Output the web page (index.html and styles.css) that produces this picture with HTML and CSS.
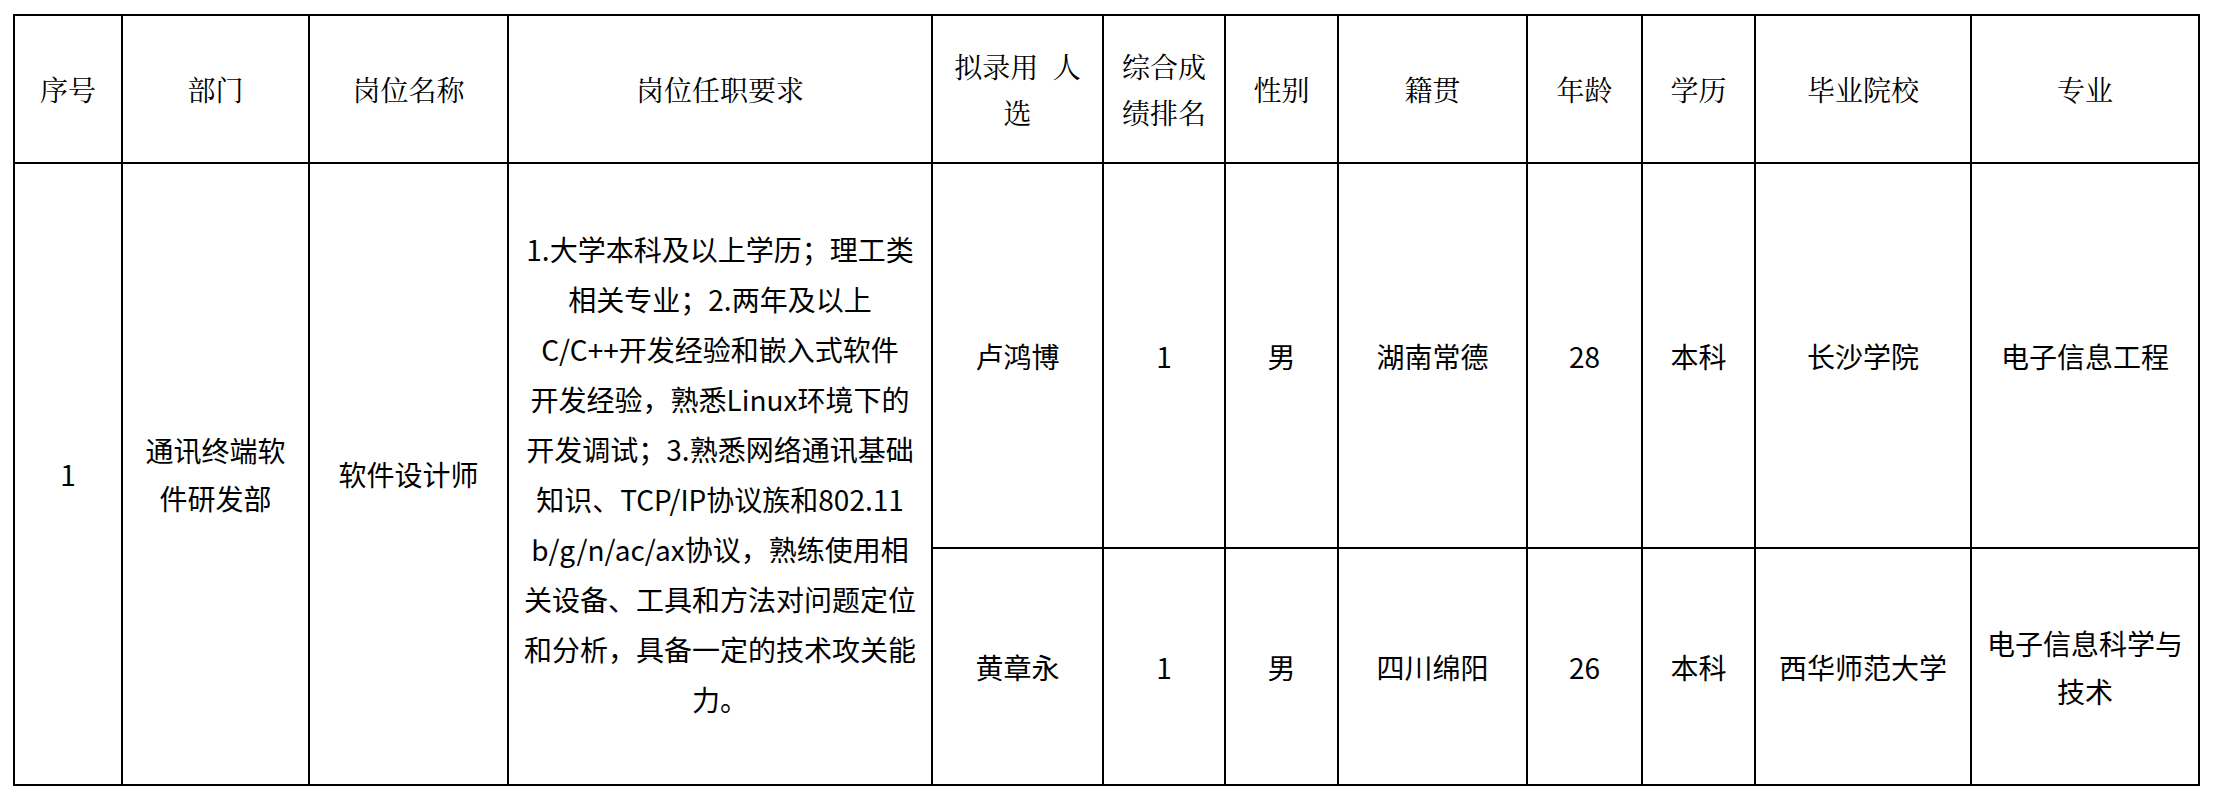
FILE: index.html
```html
<!DOCTYPE html>
<html lang="zh-CN">
<head>
<meta charset="utf-8">
<title>拟录用人员</title>
<link rel="stylesheet" href="styles.css">
</head>
<body>
<table class="grid">
  <colgroup>
    <col class="c1"><col class="c2"><col class="c3"><col class="c4"><col class="c5"><col class="c6">
    <col class="c7"><col class="c8"><col class="c9"><col class="c10"><col class="c11"><col class="c12">
  </colgroup>
  <thead>
    <tr class="head-row">
      <th>序号</th>
      <th>部门</th>
      <th>岗位名称</th>
      <th>岗位任职要求</th>
      <th>拟录用&nbsp;&nbsp;人<br>选</th>
      <th>综合成<br>绩排名</th>
      <th>性别</th>
      <th>籍贯</th>
      <th>年龄</th>
      <th>学历</th>
      <th>毕业院校</th>
      <th>专业</th>
    </tr>
  </thead>
  <tbody>
    <tr class="row-a">
      <td rowspan="2">1</td>
      <td rowspan="2" class="dept">通讯终端软<br>件研发部</td>
      <td rowspan="2">软件设计师</td>
      <td rowspan="2" class="req">1.大学本科及以上学历；理工类<br>相关专业；2.两年及以上<br>C/C++开发经验和嵌入式软件<br>开发经验，熟悉Linux环境下的<br>开发调试；3.熟悉网络通讯基础<br>知识、TCP/IP协议族和802.11<br>b/g/n/ac/ax协议，熟练使用相<br>关设备、工具和方法对问题定位<br>和分析，具备一定的技术攻关能<br>力。</td>
      <td>卢鸿博</td>
      <td>1</td>
      <td>男</td>
      <td>湖南常德</td>
      <td>28</td>
      <td>本科</td>
      <td>长沙学院</td>
      <td>电子信息工程</td>
    </tr>
    <tr class="row-b">
      <td>黄章永</td>
      <td>1</td>
      <td>男</td>
      <td>四川绵阳</td>
      <td>26</td>
      <td>本科</td>
      <td>西华师范大学</td>
      <td class="major">电子信息科学与<br>技术</td>
    </tr>
  </tbody>
</table>
</body>
</html>
```

FILE: styles.css
```css
html, body {
  margin: 0;
  padding: 0;
  background: #ffffff;
}

body {
  padding: 14px 0 0 13px;
}

.grid {
  border-collapse: collapse;
  table-layout: fixed;
  width: 2186px;
  color: #000;
  font-family: "Noto Sans CJK SC", "Noto Sans", sans-serif;
  font-size: 28px;
}

.c1 { width: 108px; }
.c2 { width: 187px; }
.c3 { width: 199px; }
.c4 { width: 424px; }
.c5 { width: 171px; }
.c6 { width: 122px; }
.c7 { width: 113px; }
.c8 { width: 189px; }
.c9 { width: 115px; }
.c10 { width: 113px; }
.c11 { width: 216px; }
.c12 { width: 228px; }

.grid th,
.grid td {
  border: 2px solid #000;
  padding: 0;
  text-align: center;
  vertical-align: middle;
  white-space: nowrap;
}

.grid th {
  font-family: "Noto Serif CJK SC", "Noto Sans CJK SC", serif;
  font-weight: 400;
  line-height: 46px;
}

.grid td {
  line-height: 48px;
}

.head-row { height: 148px; }
.row-a { height: 385px; }
.row-b { height: 237px; }

.grid td.req {
  line-height: 50px;
}

.grid td.major {
  line-height: 48px;
}
```
